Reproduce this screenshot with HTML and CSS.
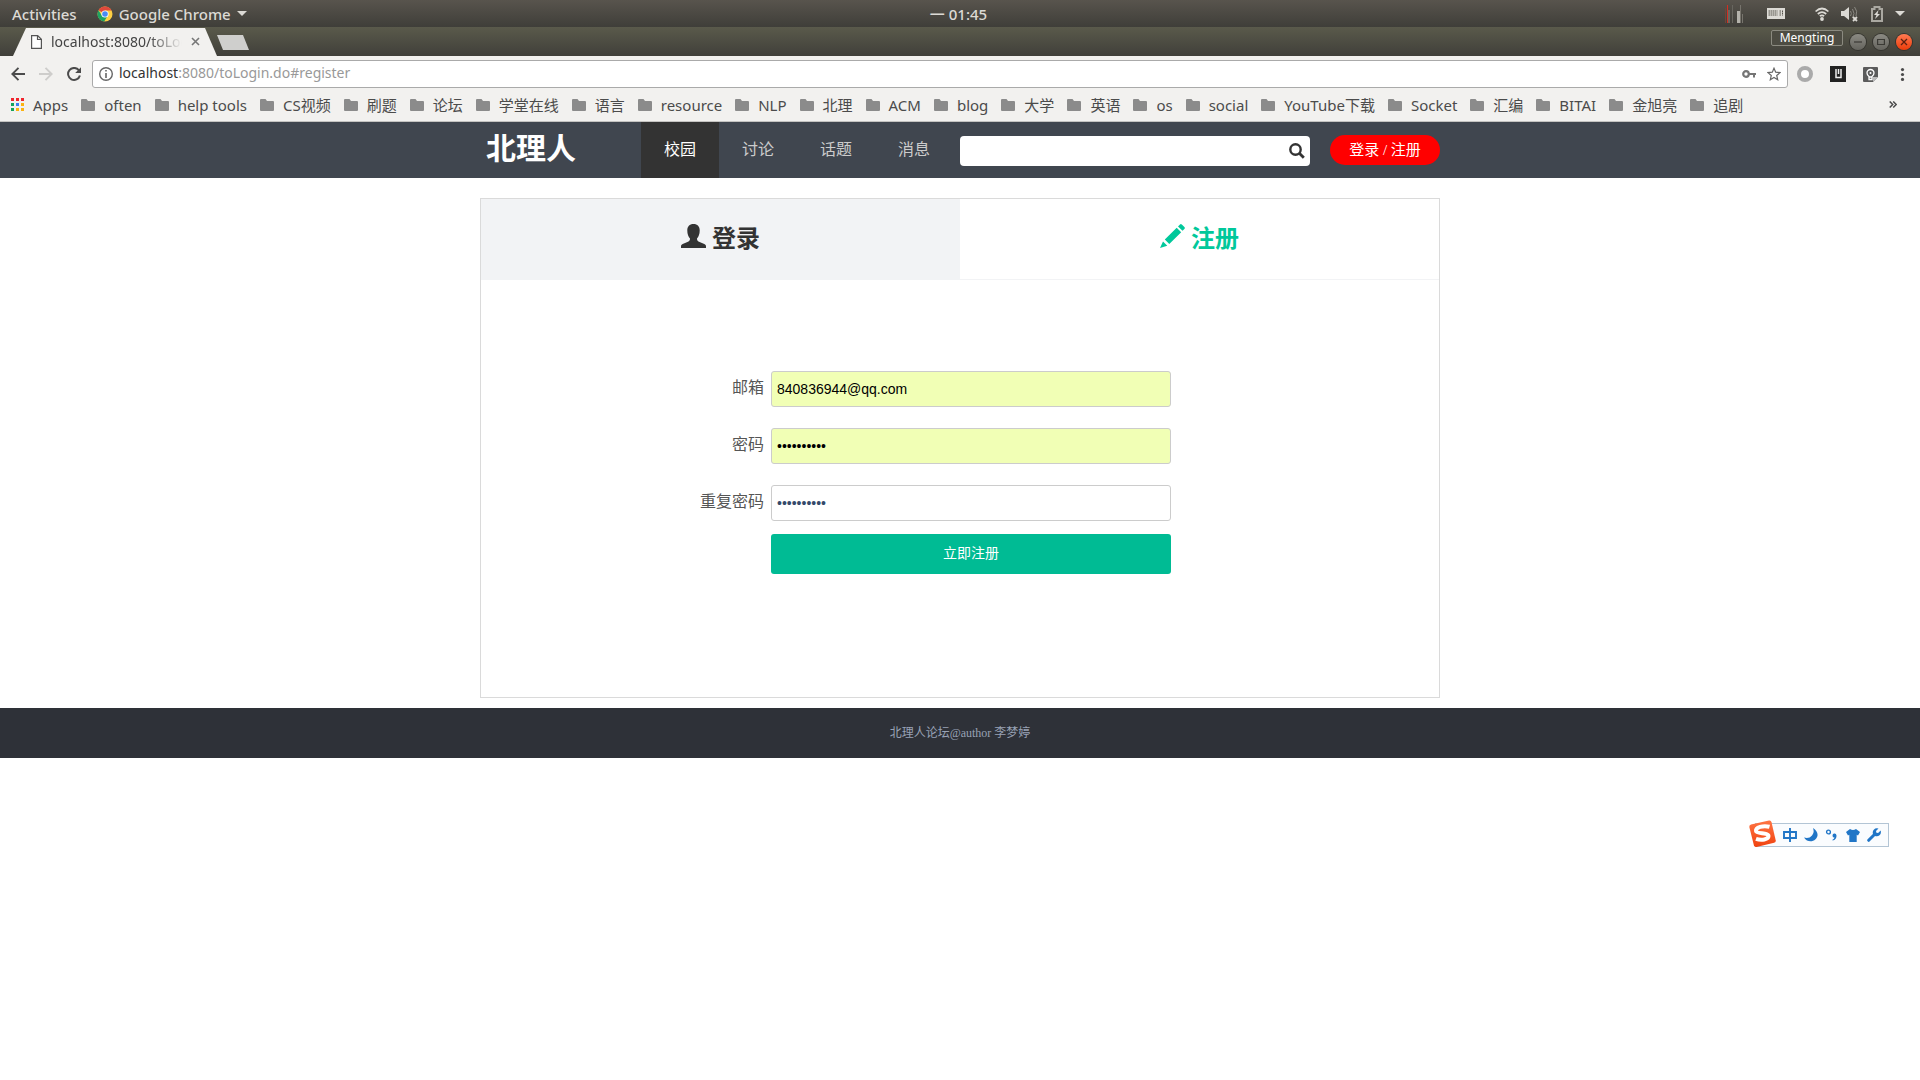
FILE: index.html
```html
<!DOCTYPE html>
<html lang="zh-CN">
<head>
<meta charset="utf-8">
<title>北理人</title>
<link rel="stylesheet" href="styles.css">
</head>
<body>
<svg class="defs" aria-hidden="true">
  <symbol id="folder" viewBox="0 0 14 12"><path d="M1 0h4.500l1.500 2h6q1 0 1 1v8q0 1-1 1H1q-1 0-1-1V1q0-1 1-1z" fill="#8b8b8b"/></symbol>
</svg>

<div class="system-bar">
  <div class="system-left">
    <span>Activities</span>
    <span class="app-menu">
      <svg width="16" height="16" viewBox="0 0 16 16"><circle cx="8" cy="8" r="7.500" fill="#fdd043"/><path d="M8 8 1.500 4.200A7.500 7.500 0 0 1 14.600 4.500H8z" fill="#e0493c"/><path d="M1.500 4.200A7.500 7.500 0 0 0 7.200 15.500L10.500 10 5 9.700z" fill="#1ea362"/><circle cx="8" cy="8" r="3.600" fill="#fff"/><circle cx="8" cy="8" r="2.800" fill="#4a8af4"/></svg>
      Google Chrome
      <svg width="10" height="5" viewBox="0 0 10 5"><path d="M0 0h10L5 5z" fill="#dcdad5"/></svg>
    </span>
  </div>
  <time class="clock">一 01:45</time>
  <div class="system-right">
    <svg class="load" width="18" height="18" viewBox="0 0 18 18"><path d="M0 3h1v15H0z" fill="#734437"/><path d="M2 0h1v18H2z" fill="#d12f22"/><path d="M3 5h2v13H3zM7 0h1v18H7z" fill="#68665f"/><path d="M12 6h3v12h-3z" fill="#b5b3ac"/><path d="M15 0h1v18h-1zM17 9h1v9h-1z" fill="#77746d"/></svg>
    <svg class="keyboard" width="18" height="11" viewBox="0 0 18 11"><path d="M0 0h18v11H0z" fill="#dcdad5"/><path d="M1.500 3h9M1.500 5h9M1.500 7h9M12.500 3h1.500M12.500 5h1.500M15.500 2.500v5M12.500 7h1.500" stroke="#55524a" stroke-dasharray="1.500 .5" fill="none"/></svg>
    <svg width="14" height="14" viewBox="0 0 14 14"><g fill="none" stroke="#dcdad5" stroke-width="1.700"><path d="M.6 4.500Q7-1.500 13.400 4.500M2.800 7q4.200-3.800 8.400 0M4.800 9.200q2.200-1.800 4.400 0"/></g><circle cx="7" cy="12" r="1.900" fill="#dcdad5"/></svg>
    <svg width="18" height="16" viewBox="0 0 18 16"><path d="M0 5h3l5-4v13L3 10H0z" fill="#dcdad5"/><path d="M9.500 5q1.700 2.500 0 5M11.500 3q3 4.500 0 9M13.500 1q3.500 4 1.500 9" stroke="#8b8982" fill="none"/><path d="m12 11 4 4m0-4-4 4" stroke="#dcdad5" stroke-width="1.800"/></svg>
    <svg width="12" height="16" viewBox="0 0 12 16"><path d="M1 3h2.500V1h5v2H11v12H1z" fill="none" stroke="#aaa8a1" stroke-width="2"/><path d="M7.500 4 3 9h2.500L4 13l5-5H6.500z" fill="#dcdad5"/></svg>
    <svg width="10" height="5" viewBox="0 0 10 5"><path d="M0 0h10L5 5z" fill="#dcdad5"/></svg>
  </div>
</div>

<div class="tab-strip">
  <div class="browser-tab">
    <svg width="11" height="14" viewBox="0 0 11 14"><path d="M.6.6h6.100l3.700 3.700v9.100H.6zM6.500.8v3.700h3.700" fill="#fff" stroke="#555" stroke-width="1.200"/></svg>
    <span class="tab-title">localhost:8080/toLogin.do</span>
    <button class="bare" aria-label="Close tab"><svg width="9" height="9" viewBox="0 0 9 9"><path d="m1 1 7 7m0-7L1 8" stroke="#777" stroke-width="1.600"/></svg></button>
  </div>
  <button class="new-tab" aria-label="New tab"></button>
  <div class="window-controls">
    <button class="profile">Mengting</button>
    <button class="round" aria-label="Minimize"><svg width="8" height="8" viewBox="0 0 8 8"><path d="M0 4h8" stroke="#3b3a35" stroke-width="1.200"/></svg></button>
    <button class="round" aria-label="Maximize"><svg width="8" height="8" viewBox="0 0 8 8"><path d="M.6 1.500h6.800v5H.6z" fill="none" stroke="#3b3a35" stroke-width="1.200"/></svg></button>
    <button class="round round-close" aria-label="Close"><svg width="8" height="8" viewBox="0 0 8 8"><path d="m1 1 6 6m0-6L1 7" stroke="#5c2010" stroke-width="1.300"/></svg></button>
  </div>
</div>

<div class="toolbar">
  <div class="history">
    <button class="bare" aria-label="Back"><svg width="14" height="14" viewBox="0 0 14 14"><path d="M14 7H1.500M7.500.8 1.300 7l6.200 6.200" fill="none" stroke="#4b4b4b" stroke-width="1.900"/></svg></button>
    <button class="bare" aria-label="Forward"><svg width="14" height="14" viewBox="0 0 14 14"><path d="M0 7h12.500M6.500.8 12.700 7l-6.200 6.200" fill="none" stroke="#cecdcb" stroke-width="1.900"/></svg></button>
    <button class="bare" aria-label="Reload"><svg width="14" height="14" viewBox="0 0 14 14"><path d="M11.800 3.200A6 6 0 1 0 12.900 8.500" fill="none" stroke="#4b4b4b" stroke-width="2"/><path d="M14 .2V6H8.200z" fill="#4b4b4b"/></svg></button>
  </div>
  <div class="address">
    <svg width="14" height="14" viewBox="0 0 14 14"><circle cx="7" cy="7" r="6.300" fill="none" stroke="#666" stroke-width="1.400"/><path d="M6.200 3h1.600v1.600H6.200zM6.200 6h1.600v5H6.200z" fill="#666"/></svg>
    <span class="url"><span class="host">localhost</span>:8080/toLogin.do#register</span>
    <svg width="14" height="8" viewBox="0 0 14 8"><circle cx="4" cy="4" r="2.800" fill="none" stroke="#757575" stroke-width="2.200"/><path d="M7 3h7v2h-1v2.500h-2V5H7z" fill="#757575"/></svg>
    <svg width="14" height="14" viewBox="0 0 14 14"><path d="m7 1.200 1.700 4 4.300.4-3.300 2.900 1 4.200L7 10.500l-3.700 2.200 1-4.200L1 5.600l4.300-.4z" fill="none" stroke="#666" stroke-width="1.200"/></svg>
  </div>
  <div class="extensions">
    <svg width="16" height="16" viewBox="0 0 16 16"><circle cx="8" cy="8" r="6" fill="#fff" stroke="#aaa" stroke-width="4"/></svg>
    <svg width="16" height="16" viewBox="0 0 16 16"><path d="M0 0h16v16H0z" fill="#222"/><path d="M6 3v8.500h5V3M8.500 3v5" fill="none" stroke="#eee" stroke-width="1.500"/></svg>
    <svg width="15" height="15" viewBox="0 0 15 15"><path d="M1 0h13q1 0 1 1v9l-5 5H1q-1 0-1-1V1q0-1 1-1z" fill="#5b5b5b"/><path d="M10 15v-5h5z" fill="#bbb"/><path d="M6 9.500Q4 8 4 6a3.500 3.500 0 0 1 7 0q0 2-2 3.500v3H6zM6 10h3" fill="none" stroke="#fff" stroke-width="1.300"/><circle cx="7.500" cy="6" r="1" fill="#fff"/></svg>
    <svg width="15" height="13" viewBox="0 0 15 13"><g fill="#4b4b4b"><circle cx="7.500" cy="1.600" r="1.600"/><circle cx="7.500" cy="6.500" r="1.600"/><circle cx="7.500" cy="11.400" r="1.600"/></g></svg>
  </div>
</div>

<nav class="bookmarks" aria-label="Bookmarks">
  <a href="#"><svg width="13" height="13" viewBox="0 0 13 13"><path d="M0 0h3v3H0zM5 0h3v3H5zM10 0h3v3h-3z" fill="#f0242c"/><path d="M0 5h3v3H0zM0 10h3v3H0z" fill="#15a35b"/><path d="M5 5h3v3H5z" fill="#3e7df0"/><path d="M10 5h3v3h-3zM5 10h3v3H5zM10 10h3v3h-3z" fill="#fbb311"/></svg>Apps</a>
  <a href="#"><svg width="14" height="12"><use href="#folder"/></svg>often</a>
  <a href="#"><svg width="14" height="12"><use href="#folder"/></svg>help tools</a>
  <a href="#"><svg width="14" height="12"><use href="#folder"/></svg>CS视频</a>
  <a href="#"><svg width="14" height="12"><use href="#folder"/></svg>刷题</a>
  <a href="#"><svg width="14" height="12"><use href="#folder"/></svg>论坛</a>
  <a href="#"><svg width="14" height="12"><use href="#folder"/></svg>学堂在线</a>
  <a href="#"><svg width="14" height="12"><use href="#folder"/></svg>语言</a>
  <a href="#"><svg width="14" height="12"><use href="#folder"/></svg>resource</a>
  <a href="#"><svg width="14" height="12"><use href="#folder"/></svg>NLP</a>
  <a href="#"><svg width="14" height="12"><use href="#folder"/></svg>北理</a>
  <a href="#"><svg width="14" height="12"><use href="#folder"/></svg>ACM</a>
  <a href="#"><svg width="14" height="12"><use href="#folder"/></svg>blog</a>
  <a href="#"><svg width="14" height="12"><use href="#folder"/></svg>大学</a>
  <a href="#"><svg width="14" height="12"><use href="#folder"/></svg>英语</a>
  <a href="#"><svg width="14" height="12"><use href="#folder"/></svg>os</a>
  <a href="#"><svg width="14" height="12"><use href="#folder"/></svg>social</a>
  <a href="#"><svg width="14" height="12"><use href="#folder"/></svg>YouTube下载</a>
  <a href="#"><svg width="14" height="12"><use href="#folder"/></svg>Socket</a>
  <a href="#"><svg width="14" height="12"><use href="#folder"/></svg>汇编</a>
  <a href="#"><svg width="14" height="12"><use href="#folder"/></svg>BITAI</a>
  <a href="#"><svg width="14" height="12"><use href="#folder"/></svg>金旭亮</a>
  <a href="#"><svg width="14" height="12"><use href="#folder"/></svg>追剧</a>
  <button class="bare more" aria-label="More bookmarks"><svg width="8" height="7" viewBox="0 0 8 7"><path d="m.7.5 3 3-3 3M4.200.5l3 3-3 3" fill="none" stroke="#4b4b4b" stroke-width="1.500"/></svg></button>
</nav>

<header class="site-header">
  <div class="container header-row">
    <a class="logo" href="#">北理人</a>
    <nav class="site-nav">
      <a class="active" href="#">校园</a>
      <a href="#">讨论</a>
      <a href="#">话题</a>
      <a href="#">消息</a>
    </nav>
    <form class="search">
      <input type="text" aria-label="搜索">
      <button class="bare" type="button" aria-label="搜索"><svg width="16" height="16" viewBox="0 0 16 16"><circle cx="6.500" cy="6.500" r="5.200" fill="none" stroke="#333" stroke-width="2.400"/><path d="m10.300 10.300 4.500 4.500" stroke="#333" stroke-width="2.800"/></svg></button>
    </form>
    <a class="account" href="#">登录 / 注册</a>
  </div>
</header>

<main class="container card">
  <div class="card-tabs">
    <a class="card-tab" href="#login"><svg width="25" height="24" viewBox="0 0 25 24" fill="currentColor"><path d="M12.500 0C16.500 0 18.700 2.600 18.700 6.500c0 3.300-1 6.200-2.700 8 0 1.700.6 2.700 2 3.300l5.300 2.300c1.100.5 1.700 1.200 1.700 2.300V24H0v-1.600c0-1.100.6-1.800 1.700-2.300L7 17.800c1.400-.6 2-1.600 2-3.300-1.700-1.800-2.700-4.700-2.700-8C6.300 2.600 8.500 0 12.500 0z"/></svg>登录</a>
    <a class="card-tab selected" href="#register"><svg width="25" height="24" viewBox="0 0 25 24" fill="currentColor"><path d="M20 .5q.9-.8 1.800 0l2.600 2.600q.9.900 0 1.800L22.500 6.800 18 2.400zM16.700 3.700l4.500 4.500L9.300 20.100 4.800 15.600zM3 17.500l4.300 4.300L0 24z"/></svg>注册</a>
  </div>
  <form class="register">
    <label for="email">邮箱</label>
    <input id="email" class="filled" type="text" value="840836944@qq.com">
    <label for="password">密码</label>
    <input id="password" class="filled" type="password" value="abcdefghij">
    <label for="repeat">重复密码</label>
    <input id="repeat" type="password" value="abcdefghij">
    <button class="submit" type="button">立即注册</button>
  </form>
</main>

<footer class="site-footer">北理人论坛@author 李梦婷</footer>

<div class="ime">
  <svg class="ime-logo" width="29" height="28" viewBox="0 0 29 28"><defs><linearGradient id="ime-red" x2="0" y2="1"><stop stop-color="#ff7443"/><stop offset="1" stop-color="#f04310"/></linearGradient></defs><path d="M3 4.500 21 .6q2-.4 2.500 1.600l4.200 18q.4 2-1.600 2.500L8.500 26.900q-2 .4-2.600-1.600L1.300 7Q1 5 3 4.500z" fill="url(#ime-red)"/><path d="M21.500 6.800C15 5 7.500 7.500 8 11c.5 3.200 12.500 1.300 12.500 5 0 3.400-7 4.800-12.500 2.800" fill="none" stroke="#fff" stroke-width="4"/></svg>
  <svg width="14" height="14" viewBox="0 0 14 14"><path d="M1 4h12v6H1zM7 0v14" fill="none" stroke="#2176c7" stroke-width="1.900"/></svg>
  <svg width="14" height="14" viewBox="0 0 14 14"><path d="M9 0c5 3 6 8 2.500 11.300C8 14.500 3 14 0 9.500c3 1 6 .5 8-2S10 3 9 0z" fill="#2176c7"/></svg>
  <svg width="14" height="14" viewBox="0 0 14 14"><circle cx="3.500" cy="4" r="1.900" fill="none" stroke="#2176c7" stroke-width="1.400"/><path d="M7.500 11.800q1.800-.6 2-2.200a2 2 0 1 1 2-2.200q.3 4-4 5.200z" fill="#2176c7"/></svg>
  <svg width="14" height="14" viewBox="0 0 14 14"><path d="M4 1q3 2 6 0l4 3-2 3.500-1.300-.8V14H3.300V6.700L2 7.500 0 4z" fill="#2176c7"/></svg>
  <svg width="14" height="14" viewBox="0 0 14 14"><path d="m1.700 12.300 6-6" stroke="#2176c7" stroke-width="3" stroke-linecap="round"/><path d="M11.500.5 9 3l.4 1.700 1.700.4 2.600-2.500q.8 3-1.200 4.700-2 1.600-4.500.6L6 6q-.8-2.500.8-4.300Q8.600-.3 11.500.5z" fill="#2176c7"/></svg>
</div>
</body>
</html>
```
FILE: styles.css
```css
* { box-sizing: border-box; }

body {
  margin: 0;
  background: #fff;
  font-family: "Liberation Serif", "Noto Sans CJK SC", serif;
}

a { color: inherit; text-decoration: none; }
svg { display: block; flex: none; }
.defs { position: absolute; width: 0; height: 0; }

.bare {
  padding: 0;
  border: 0;
  background: none;
}

/* Desktop bar */
.system-bar {
  display: grid;
  grid-template-columns: 1fr auto 1fr;
  align-items: center;
  height: 27px;
  padding: 0 15px 0 12px;
  background: linear-gradient(#58544d, #3f3e39);
  color: #dcdad5;
  font: 500 15px "Noto Sans", "Noto Sans CJK SC", sans-serif;
}
.system-left, .system-right, .app-menu { display: flex; align-items: center; }
.system-left { gap: 20px; }
.app-menu { gap: 6px; }
.system-right { justify-content: flex-end; gap: 12px; }
.load { margin-right: 12px; }
.keyboard { margin-right: 18px; }

/* Browser window */
.tab-strip {
  display: flex;
  height: 29px;
  padding: 0 8px 0 13px;
  background: linear-gradient(#5a5a4b, #403f3a);
}
.browser-tab {
  display: flex;
  align-items: center;
  gap: 9px;
  width: 204px;
  margin-top: 1px;
  padding: 0 17px 1px 18px;
  background: #f2f1ef;
  clip-path: polygon(13px 0, 192px 0, 100% 100%, 0 100%);
  color: #444;
  font: 14px "Noto Sans", sans-serif;
}
.tab-title {
  flex: 1;
  overflow: hidden;
  white-space: nowrap;
  mask-image: linear-gradient(to right, #000 75%, transparent);
}
.new-tab {
  width: 32px;
  height: 15px;
  margin-top: 8px;
  padding: 0;
  border: 0;
  background: #cfcfcd;
  clip-path: polygon(0 0, 26px 0, 100% 100%, 6px 100%);
}
.window-controls {
  display: flex;
  align-items: center;
  gap: 7px;
  margin-left: auto;
}
.profile {
  width: 72px;
  height: 16px;
  margin-bottom: 8px;
  padding: 0;
  border: 1px solid #8b8a80;
  border-radius: 2px;
  background: #4d4c43;
  color: #fff;
  font: 12px/13px "Noto Sans", sans-serif;
}
.round {
  display: grid;
  place-items: center;
  width: 16px;
  height: 16px;
  padding: 0;
  border: 0;
  border-radius: 50%;
  background: linear-gradient(#8b8a83, #65645e);
  box-shadow: 0 0 0 1px #35342f;
}
.round-close { background: linear-gradient(#ff7a52, #ec3c0a); }

.toolbar {
  display: flex;
  align-items: center;
  padding: 4px 10px 0 11px;
  background: #f2f1ef;
}
.history { display: flex; gap: 14px; }
.address {
  display: flex;
  flex: 1;
  align-items: center;
  gap: 11px;
  height: 28px;
  margin: 0 9px 0 11px;
  padding: 0 6px;
  border: 1px solid #aaa;
  border-radius: 3px;
  background: #fff;
  color: #999;
  font: 14px/24px "Noto Sans", sans-serif;
}
.url { flex: 1; margin-left: -5px; padding-bottom: 2px; }
.host { color: #333; }
.extensions { display: flex; align-items: center; gap: 17px; }

.bookmarks {
  display: flex;
  align-items: center;
  gap: 13px;
  height: 34px;
  padding: 0 23px 0 11px;
  border-bottom: 1px solid #c4c3c1;
  background: #f2f1ef;
  color: #4b4b4b;
  font: 15px/20px "Noto Sans", "Noto Sans CJK SC", sans-serif;
  white-space: nowrap;
}
.bookmarks a { display: flex; align-items: center; gap: 9px; }
.more { margin-left: auto; }

/* Site */
.container {
  width: 100%;
  max-width: 960px;
  margin: 0 auto;
}
.site-header { background: #40464f; }
.header-row { display: flex; align-items: center; height: 56px; }
.logo {
  width: 161px;
  padding: 0 0 2px 6px;
  color: #fff;
  font-size: 30px;
  font-weight: 700;
  line-height: 40px;
}
.site-nav { display: flex; }
.site-nav a {
  padding: 0 23px;
  color: #ccc;
  font-size: 16px;
  line-height: 56px;
}
.site-nav .active { background: #333; color: #fff; }
.search {
  display: flex;
  flex: 1;
  align-items: center;
  height: 30px;
  margin: 2px 20px 0 7px;
  padding-right: 5px;
  border-radius: 4px;
  background: #fff;
}
.search input {
  flex: 1;
  height: 30px;
  border: 0;
  outline: 0;
  background: none;
}
.account {
  width: 110px;
  border-radius: 15px;
  background: #f00;
  color: #fff;
  font-size: 15px;
  line-height: 30px;
  text-align: center;
}

.card {
  min-height: 500px;
  margin-top: 20px;
  border: 1px solid #dadada;
}
.card-tabs {
  display: grid;
  grid-template-columns: 1fr 1fr;
  border-bottom: 1px solid #f2f3f5;
}
.card-tab {
  display: flex;
  align-items: center;
  justify-content: center;
  gap: 6px;
  height: 80px;
  padding-bottom: 6px;
  background: #f2f3f5;
  color: #333;
  font-size: 24px;
  font-weight: 700;
}
.selected { background: #fff; color: #00c89b; }

.register {
  display: grid;
  grid-template-columns: 64px 400px;
  gap: 21px 7px;
  width: 471px;
  margin: 91px auto 0 219px;
}
.register label {
  color: #555;
  font-size: 16px;
  line-height: 34px;
  text-align: right;
}
.register input {
  height: 36px;
  padding: 0 5px;
  border: 1px solid #ccc;
  border-radius: 3px;
  outline: 0;
  background: #fff;
  color: #34496a;
  font: 14px "Liberation Sans", sans-serif;
}
.register .filled { background: #f1ffb5; color: #000; }
.submit {
  grid-column: 2;
  height: 40px;
  margin-top: -8px;
  padding: 0 0 4px;
  border: 0;
  border-radius: 3px;
  background: #00bb94;
  color: #fff;
  font: 14px "Noto Sans CJK SC", sans-serif;
}

.site-footer {
  margin-top: 10px;
  background: #2e3138;
  color: #99a2b5;
  font-size: 12px;
  line-height: 50px;
  text-align: center;
}

/* Floating input-method panel */
.ime {
  position: absolute;
  top: 823px;
  right: 31px;
  display: flex;
  align-items: center;
  gap: 7px;
  height: 24px;
  padding: 0 7px 0 0;
  border: 1px solid #b3c5d5;
  background: #fafcfe;
}
.ime-logo { margin: -3px -1px 0 -8px; }
```
